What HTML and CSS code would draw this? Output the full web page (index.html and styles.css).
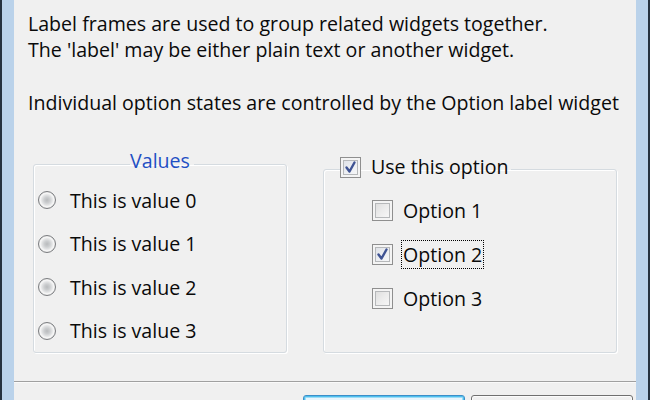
FILE: index.html
```html
<!DOCTYPE html>
<html>
<head>
<meta charset="utf-8">
<link rel="stylesheet" href="styles.css">
</head>
<body>
<div class="window">
  <div class="client">
    <div class="intro">
      <p>Label frames are used to group related widgets together.<br>The 'label' may be either plain text or another widget.</p>
      <p class="gap">Individual option states are controlled by the Option label widget</p>
    </div>
    <div class="frames">
      <fieldset class="group values">
        <legend class="title">Values</legend>
        <div class="row"><span class="radio"></span><span class="label">This is value 0</span></div>
        <div class="row"><span class="radio"></span><span class="label">This is value 1</span></div>
        <div class="row"><span class="radio"></span><span class="label">This is value 2</span></div>
        <div class="row"><span class="radio"></span><span class="label">This is value 3</span></div>
      </fieldset>
      <fieldset class="group options">
        <legend class="check-legend">
          <span class="check on"><svg viewBox="0 0 21 21" width="21" height="21"><polyline points="6.5,10.5 9.5,14.5 14.5,5.5" fill="none" stroke="#3f5393" stroke-width="2.4" stroke-linecap="round" stroke-linejoin="round"/></svg></span>
          <span class="label">Use this option</span>
        </legend>
        <div class="row"><span class="check"></span><span class="label">Option 1</span></div>
        <div class="row"><span class="check on"><svg viewBox="0 0 21 21" width="21" height="21"><polyline points="6.5,10.5 9.5,14.5 14.5,5.5" fill="none" stroke="#3f5393" stroke-width="2.4" stroke-linecap="round" stroke-linejoin="round"/></svg></span><span class="label focus">Option 2</span></div>
        <div class="row"><span class="check"></span><span class="label">Option 3</span></div>
      </fieldset>
    </div>
    <div class="separator"></div>
    <div class="buttons">
      <div class="btn default"></div>
      <div class="btn"></div>
    </div>
  </div>
</div>
</body>
</html>
```
FILE: styles.css
```css
html, body {
  margin: 0;
  padding: 0;
  height: 400px;
  overflow: hidden;
}
body {
  font-family: "Open Sans", "Noto Sans", sans-serif;
  font-size: 19.6px;
  color: #0a0a0a;
}
.window {
  box-sizing: border-box;
  height: 400px;
  border-left: 2px solid #26323f;
  border-right: 2px solid #26323f;
  padding: 0 12px;
  background: #bad2ea;
}
.client {
  height: 100%;
  background: #f0f0f0;
}
.intro {
  padding: 11px 0 0 14px;
  line-height: 26.33px;
}
.intro p {
  margin: 0;
}
.intro .gap {
  margin-top: 26.33px;
}
.frames {
  display: flex;
  gap: 36px;
  margin: 0 0 0 19px;
  height: 202px;
  padding-top: 35px;
}
.group {
  margin: 0;
  min-width: 0;
  box-sizing: border-box;
  border: 1px solid #d5dbe0;
  border-radius: 3px;
  box-shadow: inset 1px 1px 0 #fff, 1px 1px 0 #fff;
}
.values {
  width: 254px;
  padding: 0 0 0 4px;
}
.options {
  width: 294px;
  padding: 1px 0 0 48px;
}
.title {
  margin: 0 auto;
  padding: 0 4px 7px 0;
  line-height: 20px;
  color: #1f4fc4;
}
.check-legend {
  display: flex;
  align-items: center;
  margin-left: -32px;
  padding: 3px 2px 7px 0;
  line-height: 26px;
  gap: 10px;
}
.row {
  display: flex;
  align-items: center;
  height: 43.5px;
}
.values .row .label {
  margin-left: 14px;
}
.options .row {
  height: 44px;
}
.options .row .label {
  margin-left: 8px;
  padding: 0 1px;
  border: 1px dotted transparent;
  line-height: 27px;
}
.options .row .label.focus {
  border-color: #000;
}
.radio {
  box-sizing: border-box;
  width: 18px;
  height: 18px;
  border-radius: 50%;
  border: 1px solid #7a7c7f;
  background: radial-gradient(circle at 50% 50%, #b9bbbd 0, #cbcdcf 25%, #e2e3e4 45%, #f7f7f7 60%, #dadada 82%, #c2c2c2 100%);
  flex: none;
}
.check {
  box-sizing: border-box;
  width: 21px;
  height: 21px;
  border: 1px solid #8f8f8f;
  background: linear-gradient(135deg, #d9d9d9 0%, #ececec 50%, #fbfbfb 100%);
  box-shadow: inset 0 0 0 2px #f4f4f4, inset 0 0 0 3px #b6b8ba;
  flex: none;
}
.check.on {
  background: linear-gradient(135deg, #dadde3 0%, #eceef2 50%, #fafafa 100%);
}
.check svg {
  display: block;
  margin: -1px;
}
.separator {
  margin-top: 28px;
  height: 1px;
  background: #a0a0a0;
  border-bottom: 1px solid #fafafa;
}
.buttons {
  display: flex;
  justify-content: flex-end;
  gap: 6px;
  padding: 12px 3px 0 0;
}
.btn {
  box-sizing: border-box;
  width: 162px;
  height: 24px;
  border: 1px solid #707070;
  border-radius: 3px;
  background: linear-gradient(#f2f2f2, #ebebeb 50%, #dddddd);
  box-shadow: inset 0 0 0 1px #fcfcfc;
}
.btn.default {
  border-color: #3c8ec8;
  box-shadow: inset 0 0 0 1px #4fc0ee, inset 0 0 0 2px #9edcf6;
  background: linear-gradient(#eaf6fd, #d9f0fc);
}
```
